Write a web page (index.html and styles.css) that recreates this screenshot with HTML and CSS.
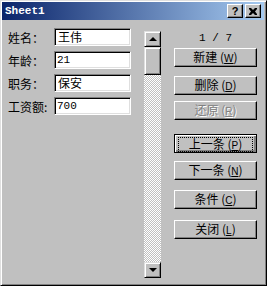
FILE: index.html
```html
<!DOCTYPE html>
<html lang="zh-CN">
<head>
    <meta charset="UTF-8">
    <title>Sheet1</title>
    <link rel="stylesheet" href="styles.css">
</head>
<body>
    <div class="window">
        <div class="titlebar">
            <span class="title">Sheet1</span>
            <div class="title-buttons">
                <span class="tbtn help">?</span>
                <span class="tbtn close">
                    <svg width="8" height="7" viewBox="0 0 8 7"><path d="M0 0h2l2 2 2-2h2v1l-2 2.5 2 2.5v1h-2l-2-2-2 2h-2v-1l2-2.5-2-2.5z" fill="#000"/></svg>
                </span>
            </div>
        </div>

        <div class="main">
            <div class="fields">
                <div class="row">
                    <span class="label">姓名：</span>
                    <div class="field">王伟</div>
                </div>
                <div class="row">
                    <span class="label">年龄：</span>
                    <div class="field num">21</div>
                </div>
                <div class="row">
                    <span class="label">职务：</span>
                    <div class="field">保安</div>
                </div>
                <div class="row">
                    <span class="label">工资额:</span>
                    <div class="field num">700</div>
                </div>
            </div>

            <div class="scrollbar">
                <div class="sb-btn"><span class="arrow up"></span></div>
                <div class="sb-thumb"></div>
                <div class="sb-track"></div>
                <div class="sb-btn"><span class="arrow down"></span></div>
            </div>

            <div class="actions">
                <div class="counter">1 / 7</div>
                <button class="btn b-new">新建 (<u>W</u>)</button>
                <button class="btn b-del">删除 (<u>D</u>)</button>
                <button class="btn b-undo" disabled>还原 (<u>R</u>)</button>
                <button class="btn b-prev default"><span class="focus">上一条 (<u>P</u>)</span></button>
                <button class="btn b-next">下一条 (<u>N</u>)</button>
                <button class="btn b-crit">条件 (<u>C</u>)</button>
                <button class="btn b-close">关闭 (<u>L</u>)</button>
            </div>
        </div>
    </div>
</body>
</html>
```

FILE: styles.css
```css
body {
    margin: 0;
    font-family: "Noto Sans CJK SC", sans-serif;
    font-size: 12px;
    color: #000;
}

.window {
    width: 267px;
    height: 286px;
    box-sizing: border-box;
    background: #c0c0c0;
    border: 1px solid;
    border-color: #dfdfdf #000 #000 #dfdfdf;
    box-shadow: inset 1px 1px #fff, inset -1px -1px #808080;
    padding: 1px 2px 2px 1px;
}

.titlebar {
    height: 18px;
    display: flex;
    align-items: center;
    background: linear-gradient(to right, #0a246a, #a6caf0);
    padding-left: 3px;
}

.title {
    flex: 1;
    color: #fff;
    font-family: "Liberation Mono", monospace;
    font-weight: bold;
    font-size: 11px;
}

.title-buttons {
    display: flex;
    gap: 2px;
    margin-right: 3px;
}

.tbtn {
    width: 14px;
    height: 12px;
    display: flex;
    align-items: center;
    justify-content: center;
    background: #c0c0c0;
    border: 1px solid;
    border-color: #fff #000 #000 #fff;
    box-shadow: inset -1px -1px #808080;
    font-family: "Liberation Sans", sans-serif;
    font-weight: bold;
    font-size: 11px;
    line-height: 1;
}

.main {
    display: flex;
    align-items: flex-start;
}

/* left form */
.fields {
    padding: 8px 0 0 6px;
}

.row {
    display: flex;
    align-items: center;
    height: 18px;
    margin-bottom: 5px;
}

.label {
    width: 46px;
    white-space: nowrap;
}

.field {
    width: 77px;
    height: 18px;
    box-sizing: border-box;
    background: #fff;
    border: 1px solid;
    border-color: #808080 #fff #fff #808080;
    box-shadow: inset 1px 1px #000, inset -1px -1px #dfdfdf;
    padding: 0 3px;
    line-height: 16px;
}

.field.num {
    font-family: "Liberation Mono", monospace;
    font-size: 11px;
    padding-left: 2px;
}

/* scrollbar */
.scrollbar {
    width: 17px;
    height: 247px;
    margin: 11px 0 0 13px;
    display: flex;
    flex-direction: column;
}

.sb-btn, .sb-thumb {
    box-sizing: border-box;
    background: #c0c0c0;
    border: 1px solid;
    border-color: #dfdfdf #000 #000 #dfdfdf;
    box-shadow: inset 1px 1px #fff, inset -1px -1px #808080;
}

.sb-btn {
    height: 16px;
    display: flex;
    align-items: center;
    justify-content: center;
}

.sb-thumb {
    height: 28px;
}

.sb-track {
    flex: 1;
    background: repeating-conic-gradient(#fff 0 25%, #c0c0c0 0 50%) 0 0 / 2px 2px;
}

.arrow {
    width: 0;
    height: 0;
    border-left: 4px solid transparent;
    border-right: 4px solid transparent;
}

.arrow.up {
    border-bottom: 4px solid #000;
}

.arrow.down {
    border-top: 4px solid #000;
}

/* right column */
.actions {
    width: 83px;
    margin-left: 13px;
    display: flex;
    flex-direction: column;
}

.counter {
    margin-top: 10px;
    height: 16px;
    line-height: 16px;
    text-align: center;
    font-family: "Liberation Mono", monospace;
    font-size: 11px;
}

.btn {
    height: 19px;
    padding: 0;
    box-sizing: border-box;
    background: #c0c0c0;
    border: 1px solid;
    border-color: #fff #000 #000 #fff;
    box-shadow: inset -1px -1px #808080;
    font-family: "Noto Sans CJK SC", sans-serif;
    font-size: 12px;
    line-height: 15px;
    color: #000;
}

.btn u {
    font-family: "Liberation Sans", sans-serif;
    font-size: 10px;
}

.btn:disabled {
    color: #808080;
    text-shadow: 1px 1px #fff;
}

.btn.default {
    border: 1px solid #000;
    box-shadow: inset 1px 1px #fff, inset -2px -2px #808080, inset -1px -1px #000;
}

.focus {
    display: block;
    margin: 2px 3px;
    border: 1px dotted #000;
    line-height: 11px;
}

.b-new { margin-top: 2px; }
.b-del { margin-top: 9px; }
.b-undo { margin-top: 6px; }
.b-prev { margin-top: 14px; }
.b-next { margin-top: 8px; }
.b-crit { margin-top: 10px; }
.b-close { margin-top: 11px; }
```
